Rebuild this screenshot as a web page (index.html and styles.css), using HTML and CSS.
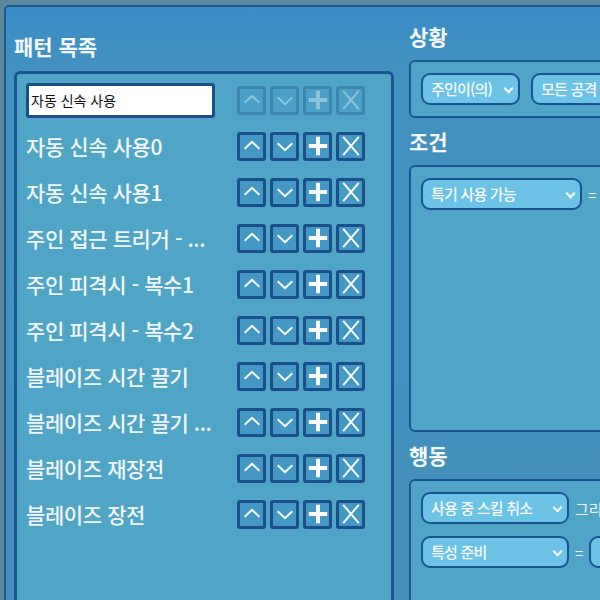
FILE: index.html
```html
<!DOCTYPE html>
<html lang="ko">
<head>
  <meta charset="UTF-8">
  <title>패턴 편집</title>
  <link rel="stylesheet" href="styles.css">
</head>
<body>
  <div class="window">
    <div class="left-pane">
      <h2 class="title">패턴 목족</h2>
      <div class="pattern-list">
        <div class="row">
          <input class="name-input" type="text" value="자동 신속 사용">
          <div class="tools disabled">
            <button class="tool"><svg viewBox="0 0 24 24"><path d="M4 15 L12 7.5 L20 15"/></svg></button>
            <button class="tool"><svg viewBox="0 0 24 24"><path d="M4 9 L12 16.5 L20 9"/></svg></button>
            <button class="tool"><svg viewBox="0 0 24 24"><path class="thick" d="M12 2 V22 M2 12 H22"/></svg></button>
            <button class="tool"><svg viewBox="0 0 24 24"><path d="M3.5 2 L20.5 22 M20.5 2 L3.5 22"/></svg></button>
          </div>
        </div>
        <div class="row" id="rows"></div>
      </div>
    </div>

    <div class="right-pane">
      <h2 class="title">상황</h2>
      <div class="box">
        <div class="line">
          <div class="select w-99">주인이(의)<span class="caret"></span></div>
          <div class="select w-120">모든 공격<span class="caret"></span></div>
        </div>
      </div>

      <h2 class="title">조건</h2>
      <div class="box tall">
        <div class="line">
          <div class="select w-161">특기 사용 가능<span class="caret"></span></div>
          <span class="op">=</span>
        </div>
      </div>

      <h2 class="title">행동</h2>
      <div class="box actions">
        <div class="line">
          <div class="select w-148">사용 중 스킬 취소<span class="caret"></span></div>
          <span class="op">그리고</span>
        </div>
        <div class="line">
          <div class="select w-148">특성 준비<span class="caret"></span></div>
          <span class="op">=</span>
          <div class="select w-120">사용<span class="caret"></span></div>
        </div>
      </div>
    </div>
  </div>

  <script>
    const patterns = [
      '자동 신속 사용0',
      '자동 신속 사용1',
      '주인 접근 트리거 - ...',
      '주인 피격시 - 복수1',
      '주인 피격시 - 복수2',
      '블레이즈 시간 끌기',
      '블레이즈 시간 끌기 ...',
      '블레이즈 재장전',
      '블레이즈 장전'
    ];

    const icons = [
      '<path d="M4 15 L12 7.5 L20 15"/>',
      '<path d="M4 9 L12 16.5 L20 9"/>',
      '<path class="thick" d="M12 2 V22 M2 12 H22"/>',
      '<path d="M3.5 2 L20.5 22 M20.5 2 L3.5 22"/>'
    ];

    const holder = document.getElementById('rows');
    patterns.forEach(function(name) {
      const row = document.createElement('div');
      row.className = 'row';
      let html = '<span class="name">' + name + '</span><div class="tools">';
      icons.forEach(function(icon) {
        html += '<button class="tool"><svg viewBox="0 0 24 24">' + icon + '</svg></button>';
      });
      row.innerHTML = html + '</div>';
      holder.parentNode.insertBefore(row, holder);
    });
    holder.remove();
  </script>
</body>
</html>
```

FILE: styles.css
```css
* { box-sizing: border-box; margin: 0; padding: 0; }
html, body {
  width: 600px;
  height: 600px;
  overflow: hidden;
}
body {
  background: #5d8799;
  padding: 5px 0 0 4px;
  font-family: 'Noto Sans CJK KR', 'Noto Sans', sans-serif;
  color: #f2f7fa;
}
.window {
  width: 780px;
  height: 640px;
  border: 2px solid #1d5791;
  border-radius: 5px;
  background: linear-gradient(180deg, #3a8cc6 0%, #4291bf 60px, #4590ba 100%);
  display: flex;
}
.title {
  font-size: 21px;
  font-weight: 700;
  line-height: 47px;
  height: 47px;
  color: #f4f8fb;
}
.left-pane {
  padding: 16px 0 0 8px;
  width: 395px;
}
.pattern-list {
  margin-top: 1px;
  width: 380px;
  height: 560px;
  background: #50a5c6;
  border: 3px solid #1a5592;
  border-radius: 6px;
  padding: 3px 0 0 9px;
}
.row {
  display: flex;
  align-items: center;
  height: 46px;
}
.name-input {
  width: 189px;
  height: 35px;
  border: 3px solid #1a4f8a;
  border-radius: 3px;
  background: #fff;
  padding: 0 2px;
  font-family: 'Noto Sans CJK KR', sans-serif;
  font-size: 14px;
  color: #111;
  outline: none;
}
.name {
  width: 211px;
  font-size: 21px;
  font-weight: 500;
  white-space: nowrap;
  overflow: hidden;
  letter-spacing: -0.4px;
}
.tools {
  display: flex;
  gap: 4px;
}
.row .name-input + .tools { margin-left: 22px; }
.tool {
  width: 29px;
  height: 29px;
  border: 3px solid #1a4f8a;
  border-radius: 3px;
  background: #4698c4;
  display: flex;
  align-items: center;
  justify-content: center;
  cursor: pointer;
}
.tool svg {
  width: 22px;
  height: 22px;
  fill: none;
  stroke: #fff;
  stroke-width: 2.1;
}
.tool svg .thick { stroke-width: 4.2; }
.tools.disabled { opacity: 0.35; }

.right-pane {
  flex: 1;
  padding: 6px 0 0 8px;
}
.box {
  background: #50a5c6;
  border: 2px solid #1a5592;
  border-radius: 6px;
  padding: 11px 10px;
  display: flex;
  flex-direction: column;
  gap: 12px;
}
.box.tall { height: 267px; }
.box.actions { height: 140px; }
.line {
  display: flex;
  align-items: center;
  gap: 6px;
}
.select {
  position: relative;
  height: 32px;
  border: 2px solid #1a5592;
  border-radius: 9px;
  background: #6cc3e6;
  padding: 0 0 0 8px;
  font-size: 15px;
  font-weight: 500;
  letter-spacing: -0.8px;
  line-height: 28px;
  white-space: nowrap;
  color: #f7fbfd;
}
.select + .select { margin-left: 5px; }
.caret {
  position: absolute;
  right: 6px;
  top: 10px;
  width: 7px;
  height: 7px;
  border-right: 2px solid #fff;
  border-bottom: 2px solid #fff;
  transform: rotate(45deg);
}
.w-99 { width: 99px; }
.w-120 { width: 120px; }
.w-148 { width: 148px; }
.w-161 { width: 161px; }
.op {
  font-size: 15px;
  color: #f2f7fa;
  white-space: nowrap;
}
```
